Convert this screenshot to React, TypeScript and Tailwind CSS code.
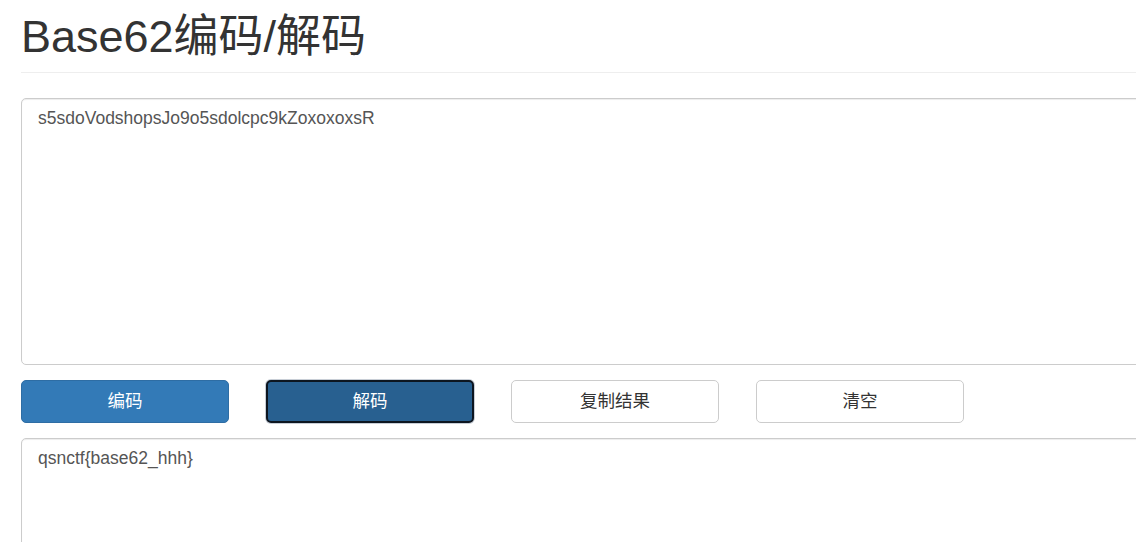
import React from "react";

export default function App() {
  const font = { fontFamily: '"Liberation Sans", Arial, "Noto Sans CJK SC", sans-serif' };
  return (
    <div className="w-[1136px] h-[542px] overflow-hidden bg-white" style={font}>
      <div className="w-[1240px] pl-[21px] pt-[12px]">
        <div className="pb-[10px] border-b border-[#eeeeee]">
          <h1 className="text-[45px] leading-[49.5px] text-[#333333] font-normal">Base62编码/解码</h1>
        </div>
        <textarea
          readOnly
          className="mt-[25px] block w-full h-[267px] resize-none border border-[#cccccc] rounded-[5px] px-[16px] py-[7.5px] text-[17.5px] leading-[25px] text-[#555555] shadow-[inset_0_1px_1px_rgba(0,0,0,0.075)] outline-none"
          defaultValue="s5sdoVodshopsJo9o5sdolcpc9kZoxoxoxsR"
        />
        <div className="flex gap-[37px] mt-[15px]">
          <button className="w-[208px] h-[43px] rounded-[5px] bg-[#337ab7] border border-[#2e6da4] text-white text-[17.5px]">
            编码
          </button>
          <button className="w-[208px] h-[43px] rounded-[5px] bg-[#286090] border-2 border-[#0d1620] shadow-[0_0_0_1px_#c8ced6] text-white text-[17.5px]">
            解码
          </button>
          <button className="w-[208px] h-[43px] rounded-[5px] bg-white border border-[#cccccc] text-[#333333] text-[17.5px]">
            复制结果
          </button>
          <button className="w-[208px] h-[43px] rounded-[5px] bg-white border border-[#cccccc] text-[#333333] text-[17.5px]">
            清空
          </button>
        </div>
        <textarea
          readOnly
          className="mt-[15px] block w-full h-[267px] resize-none border border-[#cccccc] rounded-[5px] px-[16px] py-[7.5px] text-[17.5px] leading-[25px] text-[#555555] shadow-[inset_0_1px_1px_rgba(0,0,0,0.075)] outline-none"
          defaultValue="qsnctf{base62_hhh}"
        />
      </div>
    </div>
  );
}
